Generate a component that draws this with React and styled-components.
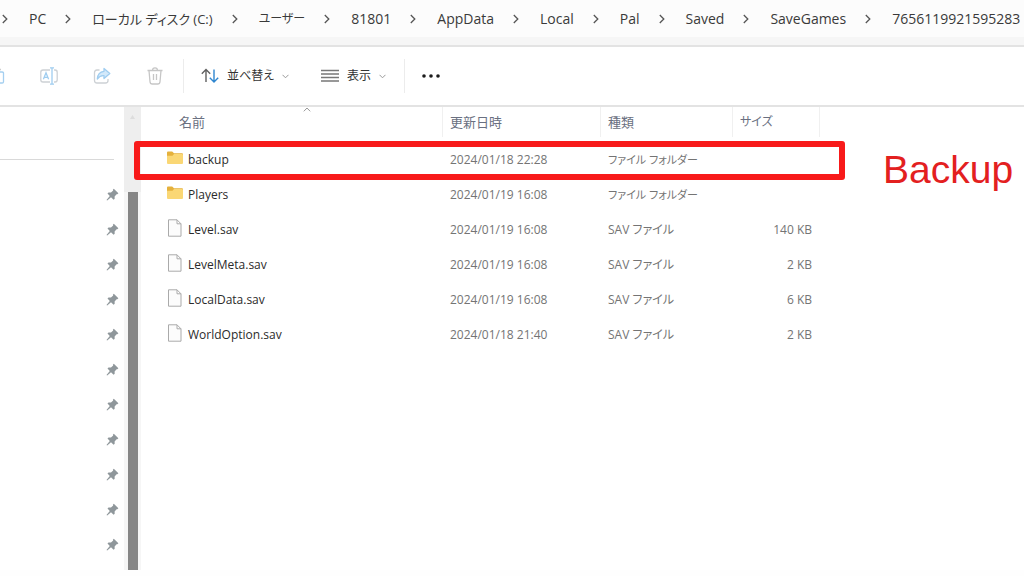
import React from "react";
import styled, { createGlobalStyle } from "styled-components";

const crumbs = [
  { label: "PC" },
  { label: "ローカル ディスク (C:)", size: 13 },
  { label: "ユーザー", size: 12 },
  { label: "81801" },
  { label: "AppData" },
  { label: "Local" },
  { label: "Pal" },
  { label: "Saved" },
  { label: "SaveGames" },
  { label: "7656119921595283" }
];

const files = [
  { name: "backup", date: "2024/01/18 22:28", type: "ファイル フォルダー", size: "", folder: true, marked: true },
  { name: "Players", date: "2024/01/19 16:08", type: "ファイル フォルダー", size: "", folder: true },
  { name: "Level.sav", date: "2024/01/19 16:08", type: "SAV ファイル", size: "140 KB" },
  { name: "LevelMeta.sav", date: "2024/01/19 16:08", type: "SAV ファイル", size: "2 KB" },
  { name: "LocalData.sav", date: "2024/01/19 16:08", type: "SAV ファイル", size: "6 KB" },
  { name: "WorldOption.sav", date: "2024/01/18 21:40", type: "SAV ファイル", size: "2 KB" }
];

const pins = Array.from({ length: 11 }, (_, i) => i);

const GlobalStyle = createGlobalStyle`
  *, *::after {
    box-sizing: border-box;
  }
  body {
    margin: 0;
    background: #fefefe;
    color: #333333;
    font-family: "Open Sans", "Noto Sans CJK JP", sans-serif;
    font-feature-settings: "palt";
    overflow: hidden;
  }
`;
const Window = styled.div`
  height: 100vh;
  display: flex;
  flex-direction: column;
  padding-bottom: 6px;
  overflow: hidden;
`;
const AddressBar = styled.nav`
  display: flex;
  align-items: center;
  height: 47px;
  padding-bottom: 7px;
  background: linear-gradient(#fcfcfc 37px, #f6f6f6 37px);
  border-bottom: 2px solid #e3e3e3;
  overflow: hidden;
`;
const Crumb = styled.span`
  display: flex;
  align-items: center;
  flex: none;
  svg {
    margin: 0 21px 0 2px;
  }
`;
const CrumbLink = styled.a`
  margin-right: 17px;
  color: #3a3a3a;
  font-size: ${props => props.$size || 14}px;
  line-height: 20px;
  white-space: nowrap;
  text-decoration: none;
`;
const Toolbar = styled.div`
  display: flex;
  align-items: center;
  flex: none;
  height: 60px;
  background: #ffffff;
  border-bottom: 2px solid #e3e3e3;
`;
const IconGroup = styled.div`
  display: flex;
  align-items: center;
  gap: 35px;
  padding-right: 19px;
`;
const ToolButton = styled.button`
  display: flex;
  align-items: center;
  gap: 8px;
  padding: 0;
  border: 0;
  background: none;
  color: #333333;
  font: inherit;
  font-size: 12px;
  line-height: 20px;
`;
const MenuGroup = styled.div`
  display: flex;
  align-items: center;
  gap: 32px;
  height: 34px;
  padding: 0 18px 0 17px;
  border-left: 1px solid #ececec;
`;
const Body = styled.div`
  display: flex;
  flex: 1;
  min-height: 0;
  background: #ffffff;
`;
const Sidebar = styled.aside`
  display: flex;
  flex-direction: column;
  width: 124px;
  padding: 52px 5px 0 0;
  overflow: hidden;
`;
const Separator = styled.hr`
  width: 100%;
  margin: 0 0 17px;
  padding-right: 5px;
  border: 0;
  height: 1px;
  flex: none;
  background: linear-gradient(#d9d9d9, #d9d9d9) content-box;
`;
const PinRow = styled.div`
  display: flex;
  align-items: center;
  justify-content: flex-end;
  flex: none;
  height: 35px;
`;
const Track = styled.div`
  display: flex;
  flex-direction: column;
  align-items: center;
  flex: none;
  width: 17px;
  padding-top: 8px;
  background: linear-gradient(#eeeeee 85px, #f6f6f6 85px);
`;
const Thumb = styled.div`
  flex: 1;
  width: 10px;
  margin-top: 73px;
  background: #868686;
`;
const Files = styled.main`
  flex: 1;
  position: relative;
  min-width: 0;
`;
const Table = styled.table`
  table-layout: fixed;
  width: 679px;
  border-collapse: separate;
  border-spacing: 0;
`;
const Column = styled.col`
  width: ${props => props.$width}px;
`;
const Heading = styled.th`
  position: relative;
  height: 30px;
  padding: 0 0 0 ${props => (props.$first ? 38 : 7)}px;
  border-right: 1px solid #f0f0f0;
  color: #6a7081;
  font-size: ${props => (props.$kana ? 12 : 13)}px;
  font-weight: 400;
  line-height: 20px;
  text-align: left;
`;
const SortMark = styled.span`
  position: absolute;
  top: 0;
  right: 131px;
  line-height: 0;
`;
const Row = styled.tr`
  position: relative;
  ${props =>
    props.$marked &&
    `&::after {
      content: "";
      position: absolute;
      top: -1px;
      left: -7px;
      width: 711px;
      height: 39px;
      border: 6px solid #f81a1a;
      border-radius: 3px;
    }`}
`;
const Cell = styled.td`
  height: 35px;
  padding: 0 8px 0 7px;
  color: #747474;
  font-size: ${props => (props.$kana ? 11 : 12)}px;
  line-height: 20px;
  text-align: ${props => (props.$right ? "right" : "left")};
  white-space: nowrap;
`;
const NameCell = styled(Cell)`
  padding-left: 26px;
  color: #2b2b2b;
`;
const FileName = styled.span`
  display: flex;
  align-items: center;
  gap: 5px;
  svg {
    flex: none;
    margin-bottom: 4px;
  }
`;
const Spacer = styled.div`
  height: 3px;
`;
const Note = styled.p`
  position: absolute;
  top: 40px;
  left: 742px;
  margin: 0;
  color: #e3201f;
  font-family: "Liberation Sans", sans-serif;
  font-size: 39px;
  line-height: 46px;
`;

const Chevron = () => (
  <svg width="6" height="10" viewBox="0 0 6 10" fill="none" stroke="#555" strokeWidth="1.3">
    <path d="M.8 1l4 4-4 4" />
  </svg>
);
const Down = () => (
  <svg width="7" height="5" viewBox="0 0 7 5" fill="none" stroke="#999">
    <path d="M.5.8l3 3 3-3" />
  </svg>
);
const CopyIcon = () => (
  <svg width="5" height="18" viewBox="0 0 5 18" fill="none" strokeWidth="1.3">
    <path d="M0 2.5h1" stroke="#ccc" />
    <path d="M0 5h2.2q1.3 0 1.3 1.3v8.4q0 1.3-1.3 1.3H0" stroke="#a5cff0" />
  </svg>
);
const RenameIcon = () => (
  <svg width="18" height="18" viewBox="0 0 18 18" fill="none" strokeWidth="1.3">
    <path d="M10 3H3Q.8 3 .8 5.200v7.600Q.8 15 3 15h7M14 3h1q2.200 0 2.200 2.200v7.600Q17.200 15 15 15h-1" stroke="#cdd1d5" />
    <path d="M12 1v16M10 .8h4M10 17.200h4M3.400 12.200L6 5.800l2.600 6.400M4.300 10.300h3.400" stroke="#9fcdf0" />
  </svg>
);
const ShareIcon = () => (
  <svg width="18" height="18" viewBox="0 0 18 18" fill="none" strokeWidth="1.3">
    <path d="M6.500 3H4Q1.500 3 1.500 5.500v8Q1.500 16 4 16h8.500q2.500 0 2.500-2.500V12" stroke="#cdd1d5" />
    <path d="M11 1.500l5.800 5L11 11.500V8.700Q7 8.300 4.300 12 4.700 5 11 4.300z" fill="#d3e9fa" stroke="#9fcdf0" strokeLinejoin="round" />
  </svg>
);
const TrashIcon = () => (
  <svg width="18" height="18" viewBox="0 0 18 18" fill="none" stroke="#c6c6c6" strokeWidth="1.3">
    <path d="M1.500 3.500h15M6.500 3.500Q6.500.8 9 .8t2.500 2.700M3 3.500l1 11.200Q4.200 17 6.200 17h5.600q2 0 2.200-2.300L15 3.500M7.500 7v6M10.500 7v6" />
  </svg>
);
const SortIcon = () => (
  <svg width="18" height="16" viewBox="0 0 18 16" fill="none" strokeWidth="1.400">
    <path d="M5 14V1.500M.8 5.700L5 1.500l4.200 4.200" stroke="#606060" />
    <path d="M13 1.500V14M8.800 9.800L13 14l4.200-4.200" stroke="#2f86cf" />
  </svg>
);
const ListIcon = () => (
  <svg width="18" height="14" viewBox="0 0 18 14" stroke="#777" strokeWidth="1.300">
    <path d="M0 1.500h18M0 5h18M0 8.500h18M0 12h18" />
  </svg>
);
const MoreIcon = () => (
  <svg width="18" height="4" viewBox="0 0 18 4" fill="#1c1c1c">
    <circle cx="2" cy="2" r="1.800" />
    <circle cx="9" cy="2" r="1.800" />
    <circle cx="16" cy="2" r="1.800" />
  </svg>
);
const PinIcon = () => (
  <svg width="13" height="13" viewBox="0 0 13 13">
    <path d="M7.800.8l4.600 4.500-1.100 1-.7-.1-2 2.200.1 2.300-1.100 1L5 9.200 1.200 12.500l-.7-.5L3.800 8 1.500 5.500l1-1 2.500.1 2.200-2-.3-.8z" fill="#8f979b" />
  </svg>
);
const FolderIcon = () => (
  <svg width="16" height="14" viewBox="0 0 16 14">
    <path d="M0 1.500Q0 .5 1 .5h4.200L7 2.300h8q1 0 1 1V6H0z" fill="#e5b13c" />
    <path d="M0 4.800h5.500L7 2.900h8q1 0 1 1V12q0 1-1 1H1q-1 0-1-1z" fill="#fad775" />
  </svg>
);
const FileIcon = () => (
  <svg width="16" height="18" viewBox="0 0 16 18" fill="#fcfcfc" stroke="#aaa">
    <path d="M1.500.8h8.500l4 4v12.400H1.500zM10 .8v4h4" />
  </svg>
);

const App = () => (
  <Window>
    <GlobalStyle />
    <AddressBar aria-label="アドレス">
      {crumbs.map(crumb => (
        <Crumb key={crumb.label}>
          <Chevron />
          <CrumbLink href="#" $size={crumb.size}>{crumb.label}</CrumbLink>
        </Crumb>
      ))}
    </AddressBar>
    <Toolbar>
      <IconGroup>
        <ToolButton aria-label="コピー"><CopyIcon /></ToolButton>
        <ToolButton aria-label="名前の変更"><RenameIcon /></ToolButton>
        <ToolButton aria-label="共有"><ShareIcon /></ToolButton>
        <ToolButton aria-label="削除"><TrashIcon /></ToolButton>
      </IconGroup>
      <MenuGroup>
        <ToolButton><SortIcon />並べ替え<Down /></ToolButton>
        <ToolButton><ListIcon />表示<Down /></ToolButton>
      </MenuGroup>
      <MenuGroup>
        <ToolButton aria-label="その他"><MoreIcon /></ToolButton>
      </MenuGroup>
    </Toolbar>
    <Body>
      <Sidebar>
        <Separator />
        {pins.map(pin => (
          <PinRow key={pin}><PinIcon /></PinRow>
        ))}
      </Sidebar>
      <Track>
        <svg width="5" height="4" viewBox="0 0 5 4" fill="#ddd"><path d="M2.500 0L5 4H0z" /></svg>
        <Thumb />
      </Track>
      <Files>
        <Table>
          <colgroup>
            <Column $width={302} />
            <Column $width={158} />
            <Column $width={132} />
            <Column $width={87} />
          </colgroup>
          <thead>
            <tr>
              <Heading $first>
                名前
                <SortMark>
                  <svg width="8" height="5" viewBox="0 0 8 5" fill="none" stroke="#999">
                    <path d="M.8 4.300L4 1l3.200 3.300" />
                  </svg>
                </SortMark>
              </Heading>
              <Heading>更新日時</Heading>
              <Heading>種類</Heading>
              <Heading $kana>サイズ</Heading>
            </tr>
          </thead>
          <tbody>
            <tr aria-hidden="true"><td colSpan="4"><Spacer /></td></tr>
            {files.map(file => (
              <Row key={file.name} $marked={file.marked}>
                <NameCell>
                  <FileName>
                    {file.folder ? <FolderIcon /> : <FileIcon />}
                    {file.name}
                  </FileName>
                </NameCell>
                <Cell>{file.date}</Cell>
                <Cell $kana={file.folder}>{file.type}</Cell>
                <Cell $right>{file.size}</Cell>
              </Row>
            ))}
          </tbody>
        </Table>
        <Note>Backup</Note>
      </Files>
    </Body>
  </Window>
);

export default App;
